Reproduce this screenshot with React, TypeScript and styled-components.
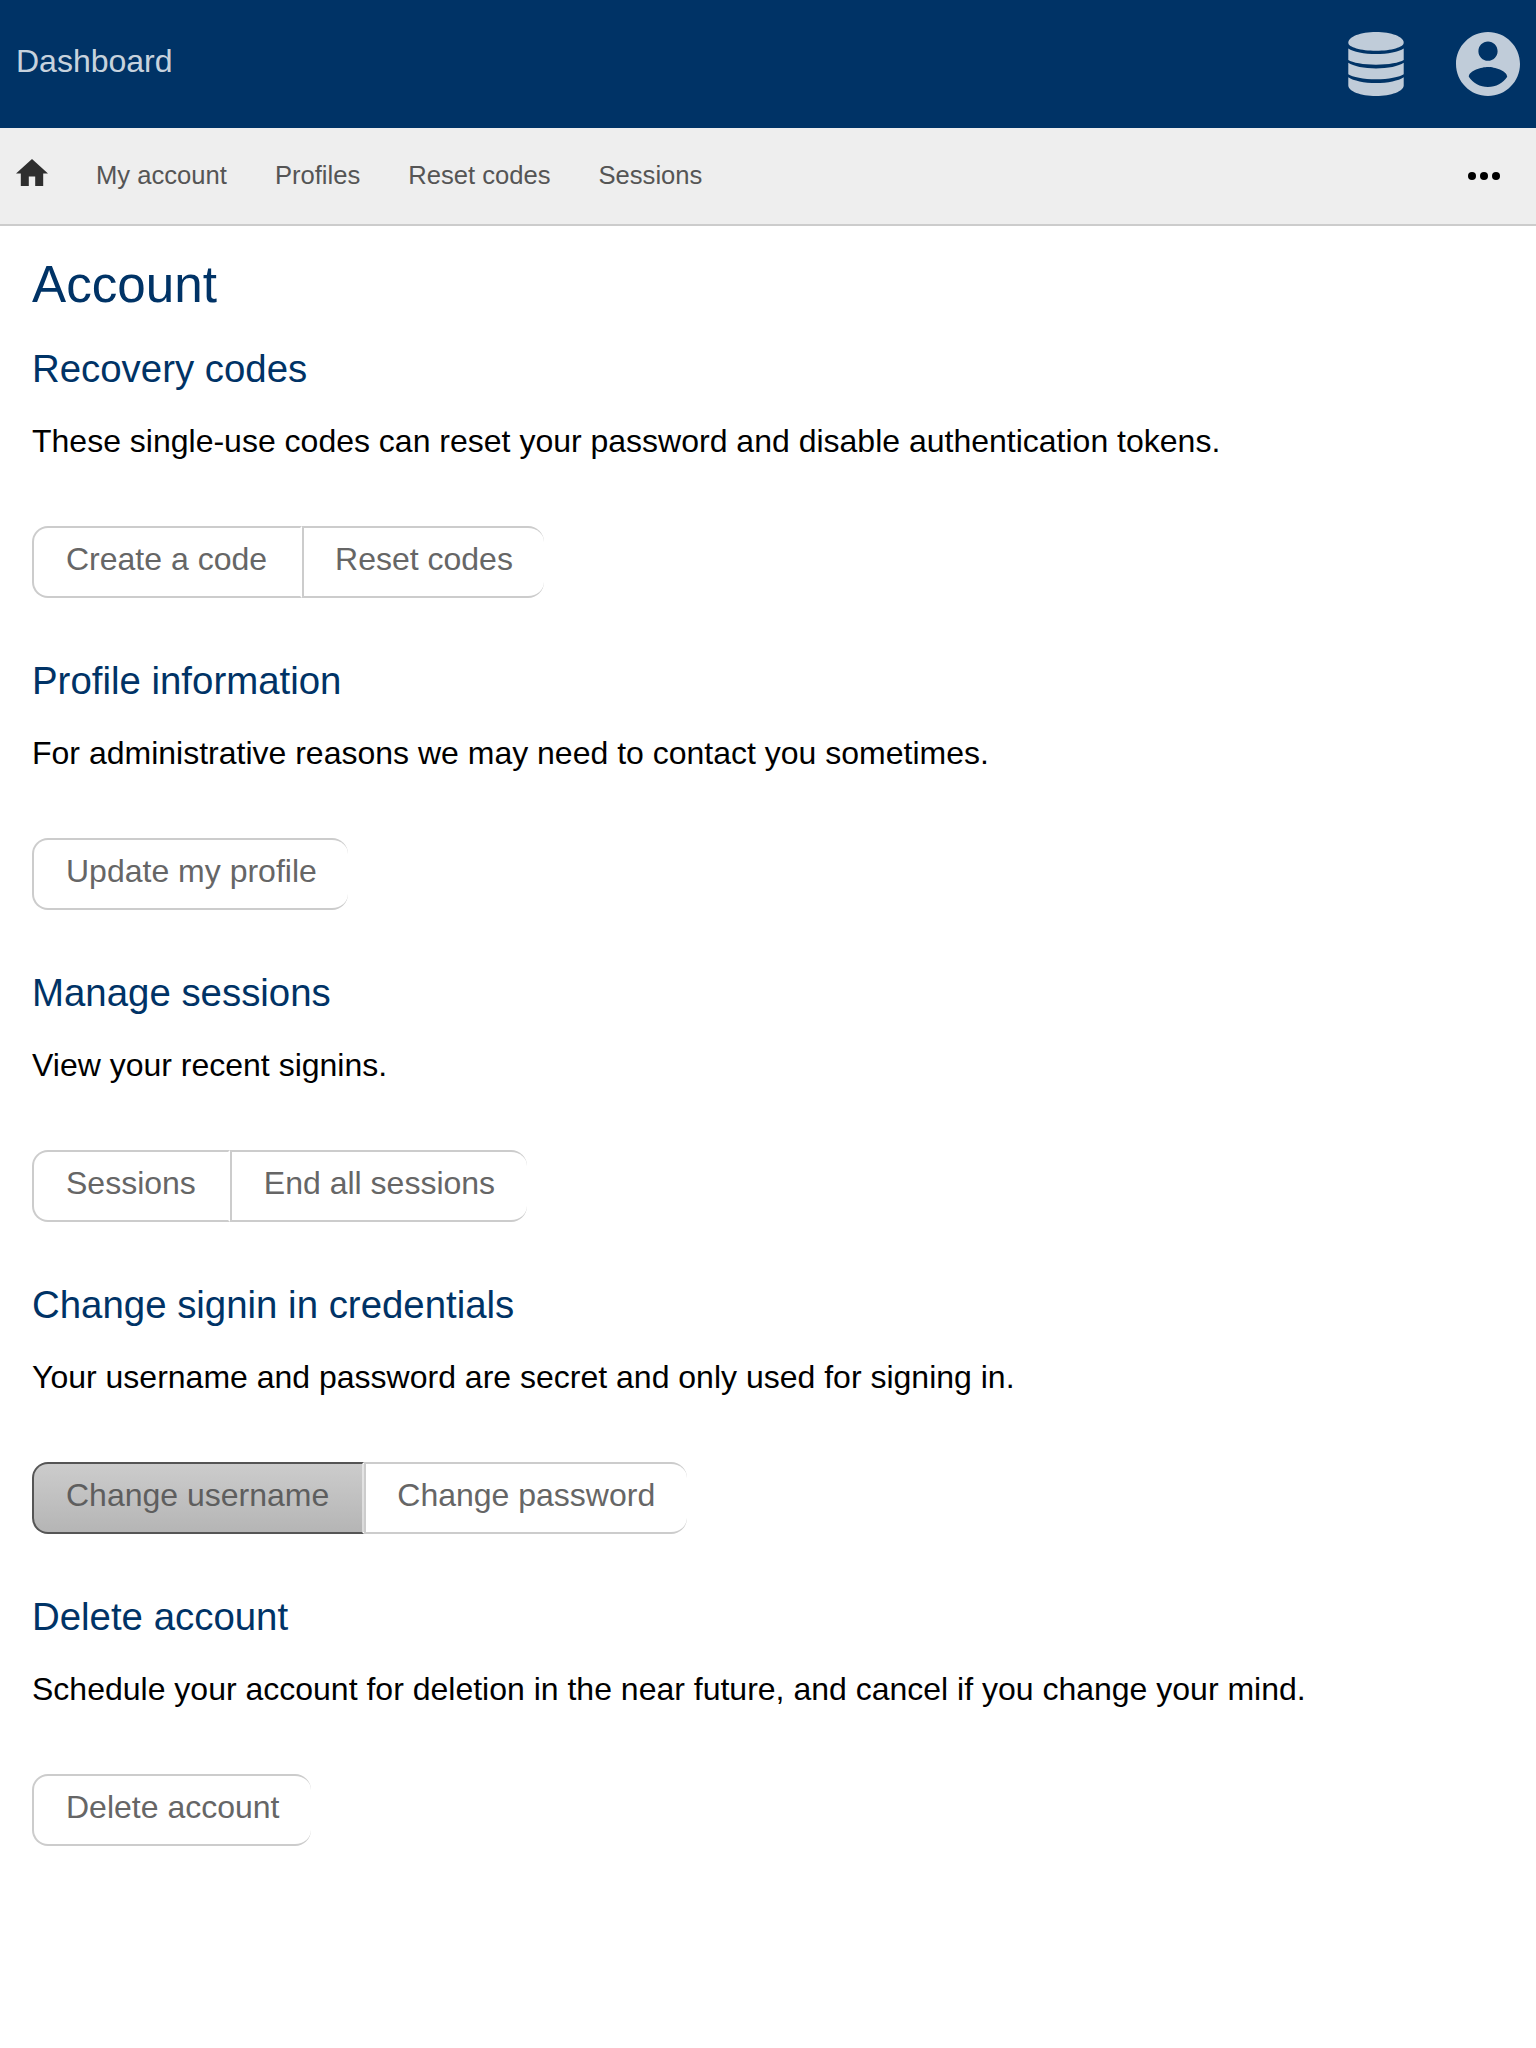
import React from "react";
import styled, { createGlobalStyle } from "styled-components";

const GlobalStyle = createGlobalStyle`
  *, *::before, *::after { box-sizing: border-box; }
  body {
    margin: 0;
    background: #fff;
    color: #000;
    font-family: "Liberation Sans", Arial, Helvetica, sans-serif;
    font-size: 32px;
    line-height: 36px;
  }
`;

const Page = styled.div`
  min-height: 2048px;
`;

const Header = styled.header`
  display: flex;
  align-items: center;
  justify-content: space-between;
  height: 128px;
  padding: 0 16px;
  background: #003366;
`;

const Brand = styled.a`
  padding-bottom: 7px;
  color: rgba(255, 255, 255, 0.8);
`;

const HeaderIcons = styled.div`
  display: flex;
  gap: 52px;
  color: #c0ccd9;
`;

const Icon = styled.svg`
  display: block;
  fill: currentColor;
`;

const Nav = styled.nav`
  display: flex;
  align-items: center;
  gap: 48px;
  height: 98px;
  padding: 0 36px 0 16px;
  background: #eee;
  border-bottom: 2px solid #ccc;
  font-size: 25.6px;
  color: #555;
`;

const HomeLink = styled.a`
  padding-bottom: 7.8px;
  color: #2e2e2e;
`;

const NavLink = styled.a`
  line-height: 30px;
  padding-bottom: 2px;
`;

const MoreButton = styled.a`
  margin-left: auto;
  color: #000;
`;

const Content = styled.main`
  padding: 29px 32px;
`;

const Title = styled.h1`
  margin: 0 0 32px;
  color: #003366;
  font-size: 51.2px;
  font-weight: 400;
  line-height: 60px;
`;

const Section = styled.section`
  margin-bottom: 61px;
`;

const Heading = styled.h2`
  margin: 0 0 32px;
  color: #003366;
  font-size: 38.4px;
  font-weight: 400;
  line-height: 44px;
`;

const Description = styled.p`
  margin: 0 0 67px;
`;

const ButtonGroup = styled.div`
  display: flex;
`;

const GroupButton = styled.button<{ $active?: boolean }>`
  height: 72px;
  padding: 0 32.5px 6px 32px;
  border: 2px solid ${(p) => (p.$active ? "#555" : "#ccc")};
  border-right-color: rgba(255, 255, 255, 0.5);
  background: ${(p) => (p.$active ? "linear-gradient(#ccc, #b5b5b5)" : "#fff")};
  color: ${(p) => (p.$active ? "#5e5e5e" : "#666")};
  font: inherit;

  &:first-child {
    border-top-left-radius: 16px;
    border-bottom-left-radius: 16px;
  }

  &:last-child {
    padding-left: 31.5px;
    padding-right: 31.6px;
    border-right-width: 0;
    border-top-right-radius: 16px;
    border-bottom-right-radius: 16px;
  }

  &:only-child {
    padding-left: 32px;
  }
`;

type Action = { label: string; active?: boolean };
type SectionData = { heading: string; text: string; actions: Action[] };

const navItems = ["My account", "Profiles", "Reset codes", "Sessions"];

const sections: SectionData[] = [
  {
    heading: "Recovery codes",
    text: "These single-use codes can reset your password and disable authentication tokens.",
    actions: [{ label: "Create a code" }, { label: "Reset codes" }],
  },
  {
    heading: "Profile information",
    text: "For administrative reasons we may need to contact you sometimes.",
    actions: [{ label: "Update my profile" }],
  },
  {
    heading: "Manage sessions",
    text: "View your recent signins.",
    actions: [{ label: "Sessions" }, { label: "End all sessions" }],
  },
  {
    heading: "Change signin in credentials",
    text: "Your username and password are secret and only used for signing in.",
    actions: [{ label: "Change username", active: true }, { label: "Change password" }],
  },
  {
    heading: "Delete account",
    text: "Schedule your account for deletion in the near future, and cancel if you change your mind.",
    actions: [{ label: "Delete account" }],
  },
];

export default function App() {
  return (
    <Page>
      <GlobalStyle />
      <Header>
        <Brand>Dashboard</Brand>
        <HeaderIcons>
          <Icon width="56" height="64" viewBox="-0.3 0 56.6 64" preserveAspectRatio="none">
            <path d="M28 0C43.5 0 56 4.7 56 10.7C56 15.2 43.5 18.7 28 18.7S0 15.2 0 10.7C0 4.7 12.5 0 28 0Z" />
            <path d="M0 16.5C5 20 16 22 28 22s23-2 28-5.500V28C52 30.700 40.500 32.700 28 32.700S4 30.700 0 28Z" />
            <path d="M0 30.800C5 34.300 16 36.500 28 36.500s23-2.200 28-5.700V42.300C52 45.200 40.500 47.300 28 47.300S4 45.200 0 42.300Z" />
            <path d="M0 45.200C5 48.700 16 51 28 51s23-2.300 28-5.800V53.500C56 59.300 43.500 64 28 64S0 59.300 0 53.500Z" />
          </Icon>
          <Icon width="64" height="64" viewBox="2 2 20 20">
            <path d="M12 2C6.480 2 2 6.480 2 12s4.480 10 10 10 10-4.480 10-10S17.520 2 12 2zm0 3c1.660 0 3 1.340 3 3s-1.340 3-3 3-3-1.340-3-3 1.340-3 3-3zm0 14.200c-2.500 0-4.710-1.280-6-3.220.030-1.990 4-3.080 6-3.080 1.990 0 5.970 1.090 6 3.080-1.290 1.940-3.500 3.220-6 3.220z" />
          </Icon>
        </HeaderIcons>
      </Header>
      <Nav>
        <HomeLink>
          <Icon width="32" height="27.2" viewBox="2 3 20 17">
            <path d="M10 20v-6h4v6h5v-8h3L12 3 2 12h3v8z" />
          </Icon>
        </HomeLink>
        {navItems.map((item) => (
          <NavLink key={item}>{item}</NavLink>
        ))}
        <MoreButton>
          <Icon width="32" height="8" viewBox="0 0 32 8">
            <circle cx="4" cy="4" r="4" />
            <circle cx="16" cy="4" r="4" />
            <circle cx="28" cy="4" r="4" />
          </Icon>
        </MoreButton>
      </Nav>
      <Content>
        <Title>Account</Title>
        {sections.map((section) => (
          <Section key={section.heading}>
            <Heading>{section.heading}</Heading>
            <Description>{section.text}</Description>
            <ButtonGroup>
              {section.actions.map((action) => (
                <GroupButton key={action.label} $active={action.active}>
                  {action.label}
                </GroupButton>
              ))}
            </ButtonGroup>
          </Section>
        ))}
      </Content>
    </Page>
  );
}
